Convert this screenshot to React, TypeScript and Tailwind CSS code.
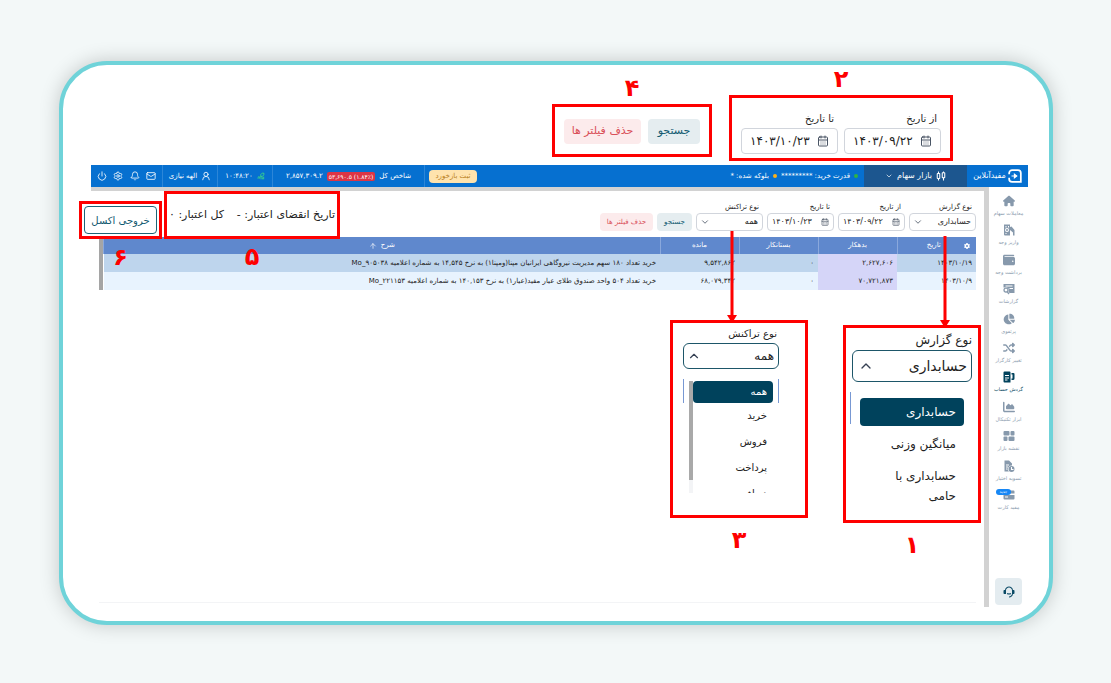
import type { ReactNode } from "react";
import { Bell, CalendarDays, ChevronDown, ChevronUp, ArrowUp, Mail, Power, Settings, UserRound } from "lucide-react";
import { FaChartArea, FaChartPie, FaGear, FaHouse, FaShuffle, FaWallet } from "react-icons/fa6";
import { RiCustomerService2Fill } from "react-icons/ri";

const svgProps = { viewBox: "0 0 24 24", fill: "currentColor", className: "size-3" };

const DepositIcon = () => (
    <svg {...svgProps}>
        <path fillRule="evenodd" d="M2 1h12v22H4a2 2 0 0 1-2-2zM5 4v3h2V4zm5 0v3h2V4zM8 8a4 4 0 1 0 0 8 4 4 0 0 0 0-8zm-3 10v2h2v-2z" />
        <circle cx="8" cy="12" r="2" />
        <path d="M14 6l3-1 6 7v11h-3v-6l-6-5z" />
    </svg>
);

const ReportIcon = () => (
    <svg {...svgProps}>
        <path fillRule="evenodd" d="M1 2h22v18H13l-2-3a6 6 0 0 0-8-8H1zm4 3v2h14V5zm8 5v2h7v-2z" />
        <circle cx="6" cy="14" r="4" fill="none" stroke="currentColor" strokeWidth="2.5" />
        <path d="M8 17l4 5" stroke="currentColor" strokeWidth="2.5" />
    </svg>
);

const LedgerIcon = () => (
    <svg {...svgProps}>
        <path fillRule="evenodd" d="M3 1h10a2 2 0 0 1 2 2v20H3a2 2 0 0 1-2-2V3a2 2 0 0 1 2-2zm1 7v2h8V8zm0 5v2h8v-2zm0 4v2h5v-2z" />
        <path d="M17 4h4a2 2 0 0 1 2 2v9a3 3 0 0 1-3 3h-3v-3h2V7h-2z" />
    </svg>
);

const MapIcon = () => (
    <svg {...svgProps}>
        <rect x="1" y="2" width="12" height="9" rx="2" />
        <rect x="15" y="2" width="8" height="9" rx="2" />
        <rect x="1" y="13" width="8" height="9" rx="2" />
        <rect x="11" y="13" width="12" height="9" rx="2" />
    </svg>
);

const SettleIcon = () => (
    <svg {...svgProps}>
        <path fillRule="evenodd" d="M3 1h9l6 6v4a7 7 0 0 0-6 12H3zm3 8v2h6V9zm0 4v2h4v-2zm0 4v2h3v-2z" />
        <path fillRule="evenodd" d="M17 12a6 6 0 1 0 0 12 6 6 0 0 0 0-12zm-1 2h2v4h3v2h-5z" />
    </svg>
);

const CardIcon = () => (
    <svg {...svgProps}>
        <path fillRule="evenodd" d="M3 3h18a2 2 0 0 1 2 2v14a2 2 0 0 1-2 2H3a2 2 0 0 1-2-2V5a2 2 0 0 1 2-2zM1 9v3h22V9zm3 6v2h6v-2z" />
    </svg>
);

const CandlesIcon = () => (
    <svg viewBox="0 0 24 24" fill="none" stroke="currentColor" strokeWidth="2.5" className="size-2.5">
        <rect x="3" y="6" width="6" height="12" rx="1" />
        <rect x="15" y="4" width="6" height="12" rx="1" />
        <path d="M6 1v5M6 18v5M18 1v3M18 16v7" />
    </svg>
);

const LogoIcon = () => (
    <svg viewBox="0 0 24 24" fill="none" stroke="currentColor" strokeWidth="3" className="size-3.5">
        <path d="M2 9V7a5 5 0 0 1 5-5h10a5 5 0 0 1 5 5v15H7a5 5 0 0 1-5-5v-2" />
        <path d="M6 12h6M11 9l4 3-4 3z" fill="currentColor" strokeWidth="2" />
    </svg>
);

const menu = [
    { label: "معاملات سهام", icon: <FaHouse className="size-3" /> },
    { label: "واریز وجه", icon: <DepositIcon /> },
    { label: "برداشت وجه", icon: <FaWallet className="size-3" /> },
    { label: "گزارشات", icon: <ReportIcon /> },
    { label: "پرتفوی", icon: <FaChartPie className="size-3" /> },
    { label: "تغییر کارگزار", icon: <FaShuffle className="size-3" /> },
    { label: "گردش حساب", icon: <LedgerIcon />, active: true },
    { label: "ابزار تکنیکال", icon: <FaChartArea className="size-3" /> },
    { label: "نقشه بازار", icon: <MapIcon /> },
    { label: "تسویه اختیار", icon: <SettleIcon /> },
    { label: "مفید کارت", icon: <CardIcon />, badge: "جدید" },
];

const rows = [
    {
        date: "۱۴۰۳/۱۰/۱۹",
        debit: "۲,۶۲۷,۶۰۶",
        credit: "۰",
        balance: "۹,۵۴۲,۸۶۲",
        text: "خرید تعداد ۱۸۰ سهم مدیریت نیروگاهی ایرانیان مپنا(ومپنا۱) به نرخ ۱۴,۵۴۵ به شماره اعلامیه Mo_۹۰۵۰۳۸",
    },
    {
        date: "۱۴۰۳/۱۰/۹",
        debit: "۷۰,۷۲۱,۸۷۳",
        credit: "۰",
        balance: "۶۸,۰۷۹,۳۴۲",
        text: "خرید تعداد ۵۰۴ واحد صندوق طلای عیار مفید(عیار۱) به نرخ ۱۴۰,۱۵۳ به شماره اعلامیه Mo_۲۲۱۱۵۳",
    },
];

function Numeral({ children }: { children: ReactNode }) {
    return <span className="text-2xl leading-6 font-bold text-[#fe0000]">{children}</span>;
}

function Arrow({ className }: { className: string }) {
    return (
        <svg viewBox="0 0 10 92" className={`absolute bottom-full h-[92px] w-2.5 ${className}`} fill="#fe0000">
            <path d="M3.5 0h3v84H10L5 92 0 84h3.5z" />
        </svg>
    );
}

function DateField({ id, label, value, large }: { id: string; label: string; value: string; large?: boolean }) {
    return (
        <div className={large ? "w-[97px]" : "w-[67px]"}>
            <label htmlFor={id} className={large ? "block px-1 text-[10px] leading-[18px]" : "block px-1 text-[7px] leading-3"}>
                {label}
            </label>
            <div
                className={`flex items-center rounded border border-gray-300 bg-white ${large ? "h-[26px] px-2" : "h-[18px] px-1"}`}
            >
                <CalendarDays className={large ? "size-3 shrink-0 text-gray-600" : "size-2 shrink-0 text-gray-600"} />
                <input
                    id={id}
                    defaultValue={value}
                    className={`w-full min-w-0 text-left outline-none ${large ? "text-xs" : "text-[8px]"}`}
                />
            </div>
        </div>
    );
}

function SmallSelect({ id, label, value }: { id: string; label: string; value: string }) {
    return (
        <div className="w-[67px]">
            <label htmlFor={id} className="block px-1 text-[7px] leading-3">
                {label}
            </label>
            <div className="relative">
                <select
                    id={id}
                    className="block h-[18px] w-full appearance-none rounded border border-gray-300 bg-white px-1 text-[8px]"
                >
                    <option>{value}</option>
                </select>
                <ChevronDown className="pointer-events-none absolute top-1 left-1 size-2.5 text-gray-600" />
            </div>
        </div>
    );
}

function FilterButtons({ large }: { large?: boolean }) {
    return (
        <>
            <button
                className={`rounded-sm bg-[#e5edf0] font-medium text-[#125a70] ${large ? "h-[25px] w-[52px] text-[11px]" : "h-[18px] w-[35px] text-[7px]"}`}
            >
                جستجو
            </button>
            <button
                className={`rounded-sm bg-[#fcebec] text-[#d94f58] ${large ? "h-[25px] w-[77px] text-[11px]" : "h-[18px] w-[53px] text-[7px]"}`}
            >
                حذف فیلتر ها
            </button>
        </>
    );
}

function TopBar() {
    return (
        <header className="flex h-[22px] items-stretch bg-[#0670d0] text-[7px] text-white">
            <div className="flex w-[61px] items-center justify-center gap-0.5">
                <LogoIcon />
                <span className="text-[8px]">مفیدآنلاین</span>
            </div>
            <button className="flex w-[103px] items-center justify-center gap-1 bg-[#1c568f] text-[8px]">
                <CandlesIcon />
                بازار سهام
                <ChevronDown className="size-2" />
            </button>
            <div className="flex items-center gap-1 px-1.5">
                <span className="size-1 rounded-full bg-[#2fb344]" />
                <span>قدرت خرید: *********</span>
                <span className="size-1 rounded-full bg-[#fbb018]" />
                <span>بلوکه شده: *</span>
            </div>
            <div className="me-auto" />
            <div className="flex items-center px-1">
                <button className="h-[13px] w-12 rounded-sm bg-[#ffe3ad] text-[7px] text-[#b9801e]">ثبت بازخورد</button>
            </div>
            <div className="flex w-[152px] items-center justify-center gap-1 border-r border-[#2c86d8]">
                <span>شاخص کل</span>
                <span dir="ltr" className="rounded-xs bg-[#dc3545] px-0.5 text-[6px] leading-[9px]">
                    ۵۳,۶۹۰.۵ (۱.۸۴٪)
                </span>
                <span>۲,۸۵۷,۳۰۹.۲</span>
            </div>
            <div className="flex w-[55px] items-center justify-center gap-1 border-r border-[#2c86d8]">
                <svg viewBox="0 0 24 24" fill="none" stroke="#3ddc84" strokeWidth="2.5" className="size-2">
                    <path d="M3 20a9 9 0 0 1 4-8M7 20a5 5 0 0 1 4-6M11 11a7 7 0 0 1 10-7c0 7-4 10-9 9zM12 22V12M16 22v-6M20 22v-8" />
                </svg>
                <span>۱۰:۴۸:۲۰</span>
            </div>
            <div className="flex w-[55px] items-center justify-center gap-1 border-r border-[#2c86d8]">
                <UserRound className="size-2.5" />
                <span>الهه نیازی</span>
            </div>
            <div className="flex w-[72px] items-center justify-between border-r border-[#2c86d8] px-1.5">
                <Mail className="size-2.5" />
                <Bell className="size-2.5" />
                <Settings className="size-2.5" />
                <Power className="size-2.5" />
            </div>
        </header>
    );
}

function Sidebar() {
    return (
        <nav className="flex w-[39px] shrink-0 flex-col items-center pt-2 pb-0.5">
            <ul className="flex h-[316px] flex-col justify-between">
                {menu.map((item) => (
                    <li key={item.label} className={item.active ? "text-[#00425c]" : "text-[#8799ac]"}>
                        <a href="#" className="relative flex flex-col items-center gap-0.5 text-[5px] leading-[8px] whitespace-nowrap">
                            {item.icon}
                            {item.label}
                            {item.badge && (
                                <span className="absolute top-0 right-3 rounded-full bg-[#1787f5] px-1 text-[4px] leading-[6px] text-white">
                                    {item.badge}
                                </span>
                            )}
                        </a>
                    </li>
                ))}
            </ul>
            <button aria-label="پشتیبانی" className="mt-auto flex size-[27px] items-center justify-center rounded-sm bg-[#e4ecf0]">
                <RiCustomerService2Fill className="size-3 text-[#0b4a66]" />
            </button>
        </nav>
    );
}

function LedgerTable() {
    return (
        <div className="border-l-4 border-[#a5a5a5]">
            <table className="w-full table-fixed text-[7px]">
                <thead className="bg-[#5f88cd] text-white">
                    <tr className="h-[17px] *:border-l *:border-[#8aa8dc] *:font-normal">
                        <th className="w-[79px]">
                            <div className="flex items-center px-1.5">
                                <FaGear className="size-1.5" />
                                <span className="flex-1">تاریخ</span>
                            </div>
                        </th>
                        <th className="w-[79px]">بدهکار</th>
                        <th className="w-[79px]">بستانکار</th>
                        <th className="w-[79px]">مانده</th>
                        <th>
                            <span className="flex items-center justify-center gap-1">
                                شرح <ArrowUp className="size-2" />
                            </span>
                        </th>
                    </tr>
                </thead>
                <tbody>
                    {rows.map((row) => (
                        <tr key={row.date} className="h-[18px] bg-[#bed5ed] *:px-1 even:bg-[#e8f3fe]">
                            <td>{row.date}</td>
                            <td className="bg-[#d5d5f8]">{row.debit}</td>
                            <td>{row.credit}</td>
                            <td>{row.balance}</td>
                            <td className="truncate">{row.text}</td>
                        </tr>
                    ))}
                </tbody>
            </table>
        </div>
    );
}

function ReportTypeCallout() {
    return (
        <div className="flex flex-col items-center gap-2.5 pt-[5px]">
            <div className="relative h-[198px] w-[138px] border-3 border-[#fe0000] bg-white px-1.5 pt-0.5">
                <Arrow className="right-7" />
                <label htmlFor="report-type-open" className="block text-xs leading-5">
                    نوع گزارش
                </label>
                <div className="relative">
                    <select
                        id="report-type-open"
                        className="block h-8 w-full appearance-none rounded-md border border-[#1d5669] bg-white px-1 text-sm"
                    >
                        <option>حسابداری</option>
                    </select>
                    <ChevronUp className="pointer-events-none absolute top-2 left-1.5 size-4 text-gray-700" />
                </div>
                {/* edge of the table header behind the menu */}
                <span className="absolute top-16 left-1 h-8 w-px bg-[#7898d3]" />
                <ul role="listbox" aria-label="نوع گزارش" className="mt-4 px-2 text-xs leading-5">
                    <li role="option" aria-selected="true" className="rounded bg-[#00425c] px-2 py-1 font-medium text-white">
                        حسابداری
                    </li>
                    <li role="option" aria-selected="false" className="px-2 py-2">
                        میانگین وزنی
                    </li>
                    <li role="option" aria-selected="false" className="px-2 py-1">
                        حسابداری با
                        <br />
                        حامی
                    </li>
                </ul>
            </div>
            <Numeral>۱</Numeral>
        </div>
    );
}

function TransactionTypeCallout() {
    return (
        <div className="flex flex-col items-center gap-2.5">
            <div className="relative h-[198px] w-[138px] border-3 border-[#fe0000] bg-white pt-0.5 pr-[26px] pl-2.5">
                <Arrow className="right-[68px]" />
                <label htmlFor="transaction-type-open" className="block px-0.5 text-[10px] leading-[18px]">
                    نوع تراکنش
                </label>
                <div className="relative">
                    <select
                        id="transaction-type-open"
                        className="block h-[26px] w-full appearance-none rounded-md border border-[#1d5669] bg-white px-1 text-xs"
                    >
                        <option>همه</option>
                    </select>
                    <ChevronUp className="pointer-events-none absolute top-1.5 left-1 size-3.5 text-gray-700" />
                </div>
                <span className="absolute top-14 left-2.5 h-6 w-px bg-[#7898d3]" />
                <span className="absolute top-14 right-[26px] h-6 w-px bg-[#7898d3]" />
                <div className="mt-3 flex h-28 overflow-hidden px-1.5">
                    <ul role="listbox" aria-label="نوع تراکنش" className="flex-1 text-[10px] leading-[26px]">
                        <li role="option" aria-selected="true" className="rounded bg-[#00425c] px-1.5 leading-[22px] font-medium text-white">
                            همه
                        </li>
                        {["خرید", "فروش", "پرداخت", "دریافت"].map((name) => (
                            <li key={name} role="option" aria-selected="false" className="px-1.5">
                                {name}
                            </li>
                        ))}
                    </ul>
                    <div className="w-1 bg-gray-100">
                        <div className="h-[99px] bg-[#a9a9a9]" />
                    </div>
                </div>
            </div>
            <Numeral>۳</Numeral>
        </div>
    );
}

export default function App() {
    return (
        <main
            dir="rtl"
            lang="fa"
            className="min-h-screen bg-[#f3f8f8] pt-[61px] pr-[58px] pb-[57px] pl-[59px] font-['DejaVu_Sans',sans-serif] text-[#222]"
        >
            <div className="rounded-[48px] border-4 border-[#6fd3d9] bg-white pb-[14px] shadow-[0_0_20px_rgba(0,0,0,0.2)]">
                <div className="flex items-end gap-[17px] pr-24 pb-1">
                    <div className="flex flex-col items-center gap-1 pt-0.5">
                        <Numeral>۲</Numeral>
                        <div className="flex gap-1.5 border-3 border-[#fe0000] px-[9px] pt-3 pb-1">
                            <DateField id="from-large" label="از تاریخ" value="۱۴۰۳/۰۹/۲۲" large />
                            <DateField id="to-large" label="تا تاریخ" value="۱۴۰۳/۱۰/۲۳" large />
                        </div>
                    </div>
                    <div className="flex flex-col items-center gap-1 pb-1">
                        <Numeral>۴</Numeral>
                        <div className="flex gap-[7px] border-3 border-[#fe0000] px-[9px] pt-3 pb-2.5">
                            <FilterButtons large />
                        </div>
                    </div>
                </div>

                <div className="mr-[21px] ml-7">
                    <TopBar />
                    <div className="flex">
                        <Sidebar />
                        <section className="min-w-0 flex-1 border-t-4 border-r-5 border-[#d2d2d2]">
                            <div className="relative px-2 pt-2.5">
                                <div className="flex items-end gap-1">
                                    <SmallSelect id="report-type" label="نوع گزارش" value="حسابداری" />
                                    <DateField id="from" label="از تاریخ" value="۱۴۰۳/۰۹/۲۲" />
                                    <DateField id="to" label="تا تاریخ" value="۱۴۰۳/۱۰/۲۳" />
                                    <SmallSelect id="transaction-type" label="نوع تراکنش" value="همه" />
                                    <FilterButtons />
                                </div>

                                {/* credit summary and export, enlarged over the toolbar */}
                                <div className="absolute top-0 -left-3 z-10 flex items-start gap-0.5">
                                    <div className="flex flex-col items-center gap-1.5">
                                        <div className="flex h-12 w-[176px] items-center justify-between border-3 border-[#fe0000] bg-white px-0.5 text-[11px] whitespace-nowrap">
                                            <span>تاریخ انقضای اعتبار: -</span>
                                            <span>کل اعتبار: ۰</span>
                                        </div>
                                        <Numeral>۵</Numeral>
                                    </div>
                                    <div className="mt-2.5 flex flex-col items-center gap-1.5">
                                        <div className="flex h-[38px] w-[83px] border-3 border-[#fe0000] bg-white p-0.5">
                                            <button className="flex-1 rounded border border-[#1d6478] text-[10px] text-[#125a70]">
                                                خروجی اکسل
                                            </button>
                                        </div>
                                        <Numeral>۶</Numeral>
                                    </div>
                                </div>
                            </div>
                            <div className="px-2 pt-1.5">
                                <LedgerTable />
                            </div>
                            <div className="flex min-h-[312px] items-start gap-[35px] pt-[30px] pr-[3px]">
                                <ReportTypeCallout />
                                <TransactionTypeCallout />
                            </div>
                            <div className="mx-2 mb-1 border-b border-gray-100" />
                        </section>
                    </div>
                </div>
            </div>
        </main>
    );
}
